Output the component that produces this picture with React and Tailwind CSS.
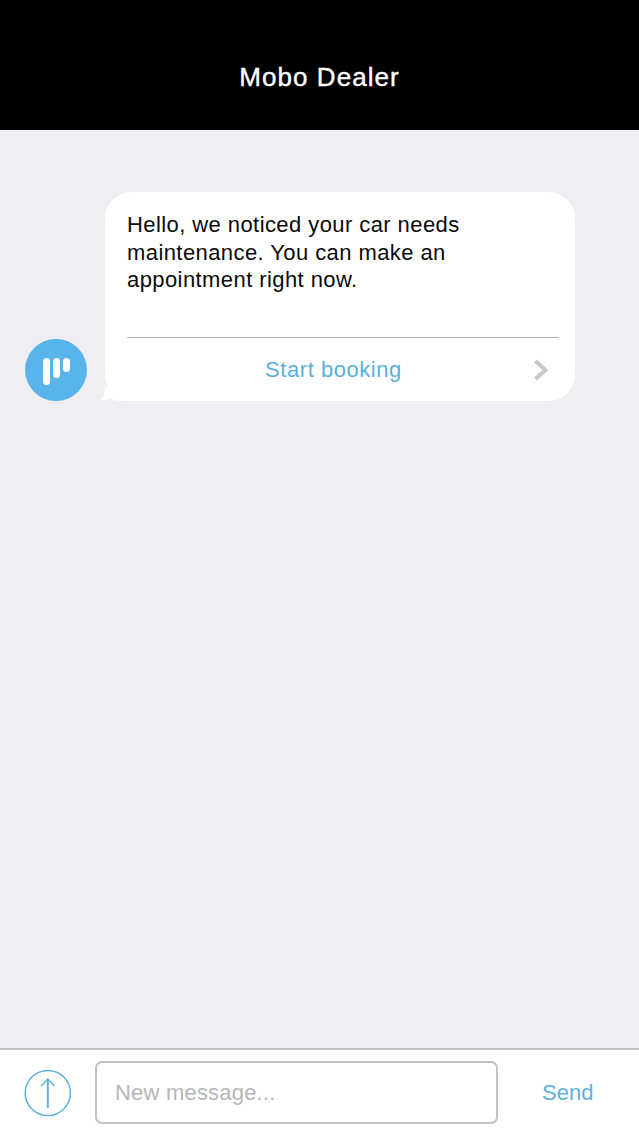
import React from 'react';

function Avatar() {
  return (
    <div className="w-[62px] h-[62px] shrink-0 rounded-full bg-[#5ab4ec] flex items-center justify-center">
      <svg width="62" height="62" viewBox="0 0 62 62">
        <rect x="18" y="19" width="7" height="27" rx="3.5" fill="#fff" />
        <rect x="28" y="19" width="7" height="20" rx="3.5" fill="#fff" />
        <rect x="38" y="19" width="7" height="14" rx="3.5" fill="#fff" />
      </svg>
    </div>
  );
}

export default function App() {
  return (
    <div className="w-[639px] h-[1136px] flex flex-col bg-[#efeef3] overflow-hidden font-['Liberation_Sans',Arial,sans-serif]">
      {/* HEADER */}
      <header className="h-[130px] shrink-0 bg-black flex items-center justify-center pt-[25px]">
        <h1 className="text-white text-[26px] font-medium tracking-[1.05px] [-webkit-text-stroke:0.4px_white]">Mobo Dealer</h1>
      </header>

      {/* MESSAGES */}
      <main className="flex-1 pt-[62px] pl-[25px]">
        <div className="flex items-end gap-[18px]">
          <Avatar />
          <div className="relative w-[470px] h-[209px] bg-white rounded-[26px] pl-[22px] pr-[17px] flex flex-col">
            <svg className="absolute left-[-5px] bottom-0" width="32" height="14" viewBox="0 0 32 14">
              <path d="M5 0 C5 6 4 11 0 13 C4 13.6 8 13 10.5 11 C13 13.4 17 14 22 14 L32 14 L32 0 Z" fill="#fff" />
            </svg>
            <p className="relative mt-[19px] text-[22px] leading-[27.5px] tracking-[0.42px] text-[#0a0a0a] h-[126px]">
              Hello, we noticed your car needs<br />maintenance. You can make an<br />appointment right now.
            </p>
            <div className="relative flex-1 border-t border-[#b5b3b6] flex items-center justify-center pr-[18px]">
              <span className="text-[22px] tracking-[0.55px] text-[#5ab1dc]">Start booking</span>
              <svg className="absolute right-[9px] top-[20px]" width="16" height="24" viewBox="0 0 16 24" fill="none">
                <path d="M2.5 3 L12.5 12 L2.5 21" stroke="#c8c7cc" strokeWidth="4" />
              </svg>
            </div>
          </div>
        </div>
      </main>

      {/* INPUT BAR */}
      <footer className="h-[88px] shrink-0 bg-white border-t-2 border-[#c4c3c6] flex items-center pl-[24px] pb-[1px]">
        <svg width="48" height="48" viewBox="0 0 48 48" fill="none" stroke="#5fb2dc">
          <circle cx="23.8" cy="24" r="22.6" strokeWidth="1.5" />
          <path d="M23.8 39 L23.8 10" strokeWidth="2" />
          <path d="M17 17 L23.8 10 L30.6 17" strokeWidth="1.5" />
        </svg>
        <div className="ml-[23px] w-[403px] h-[63px] border-2 border-[#c2c1c4] rounded-[7px] flex items-center pl-[18px] text-[22px] tracking-[0.2px] text-[#b6b6bb]">
          New message...
        </div>
        <button className="ml-[44px] text-[22px] tracking-[0px] text-[#5fb2dc]">Send</button>
      </footer>
    </div>
  );
}
